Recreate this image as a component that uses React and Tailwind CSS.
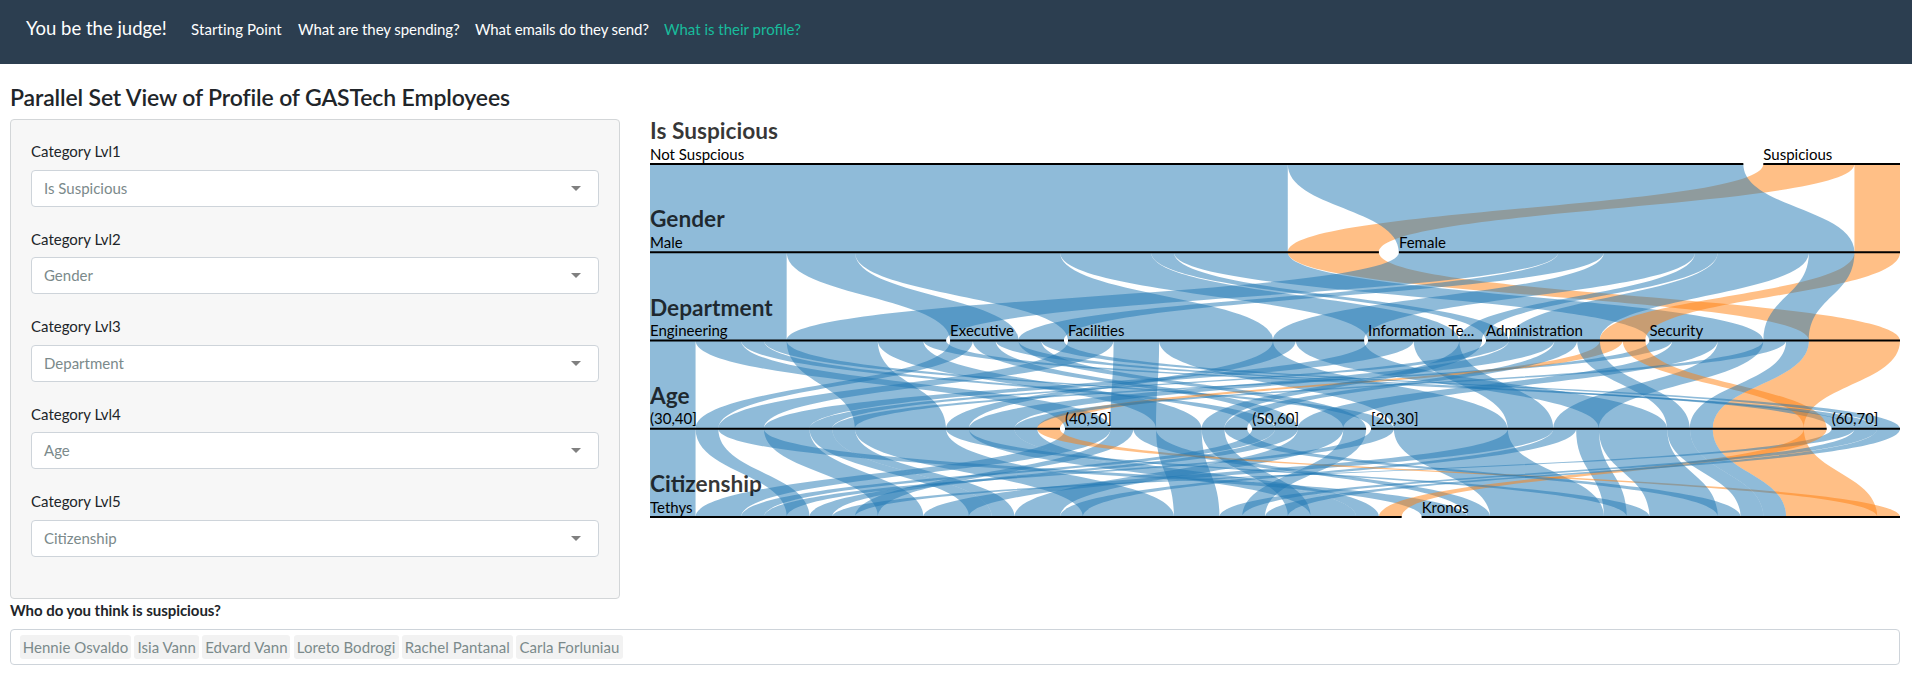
const NAV_LINKS = [
  { label: "Starting Point", tracking: "w-[107px] tracking-[0.1px]" },
  { label: "What are they spending?", tracking: "w-[177px] tracking-[-0.08px]" },
  { label: "What emails do they send?", tracking: "w-[189px] tracking-[-0.12px]" },
];
const LEVELS = ["Is Suspicious", "Gender", "Department", "Age", "Citizenship"];
const SUSPECTS = [
  { name: "Hennie Osvaldo", width: "w-[111px]" },
  { name: "Isia Vann", width: "w-[65px]" },
  { name: "Edvard Vann", width: "w-[88px]" },
  { name: "Loreto Bodrogi", width: "w-[105px]" },
  { name: "Rachel Pantanal", width: "w-[111px]" },
  { name: "Carla Forluniau", width: "w-[107px]" },
];

const DIMENSIONS = [
  { name: "Is Suspicious", categories: ["Not Suspcious", "Suspicious"] },
  { name: "Gender", categories: ["Male", "Female"] },
  {
    name: "Department",
    categories: ["Engineering", "Executive", "Facilities", "Information Te...", "Administration", "Security"],
  },
  { name: "Age", categories: ["(30,40]", "(40,50]", "(50,60]", "[20,30]", "(60,70]"] },
  { name: "Citizenship", categories: ["Tethys", "Kronos"] },
];

// One row per distinct profile: category index in each dimension, then head count.
const ROWS = [
  [0, 0, 0, 0, 0, 2],
  [0, 0, 0, 1, 0, 2],
  [0, 0, 0, 2, 0, 1],
  [0, 0, 0, 3, 0, 1],
  [0, 0, 1, 0, 0, 1],
  [0, 0, 1, 2, 0, 1],
  [0, 0, 1, 4, 0, 1],
  [0, 0, 2, 0, 1, 2],
  [0, 0, 2, 1, 0, 1],
  [0, 0, 2, 1, 1, 1],
  [0, 0, 2, 3, 1, 5],
  [0, 0, 3, 0, 0, 2],
  [0, 0, 3, 3, 0, 2],
  [0, 0, 4, 0, 0, 1],
  [0, 0, 5, 0, 0, 1],
  [0, 0, 5, 2, 0, 2],
  [0, 0, 5, 3, 0, 1],
  [0, 0, 5, 3, 1, 1],
  [0, 1, 0, 0, 0, 4],
  [0, 1, 0, 1, 0, 2],
  [0, 1, 0, 4, 0, 1],
  [0, 1, 1, 2, 0, 1],
  [0, 1, 1, 4, 0, 1],
  [0, 1, 2, 0, 1, 1],
  [0, 1, 2, 3, 1, 3],
  [0, 1, 3, 1, 0, 1],
  [0, 1, 4, 0, 0, 2],
  [0, 1, 4, 1, 1, 1],
  [0, 1, 4, 3, 1, 1],
  [0, 1, 5, 0, 0, 1],
  [0, 1, 5, 3, 1, 1],
  [1, 0, 5, 3, 1, 4],
  [1, 1, 4, 0, 1, 1],
  [1, 1, 4, 3, 0, 1],
];

const WIDTH = 1250;
const SPACING = 20;
const FIRST_Y = 45;
const STEP = 88.25;
const TOTAL = ROWS.reduce((sum, row) => sum + row[5], 0);
const UNIT = (WIDTH - SPACING) / TOTAL;
const COLORS = ["#1f77b4", "#ff7f0e"];

function buildNodes() {
  return DIMENSIONS.map((dimension, d) => {
    const gap = SPACING / (dimension.categories.length - 1);
    let x = 0;
    return dimension.categories.map((name, c) => {
      const count = ROWS.filter((row) => row[d] === c).reduce((sum, row) => sum + row[5], 0);
      const node = { name, x, width: count * UNIT };
      x += node.width + gap;
      return node;
    });
  });
}

function buildRibbons(nodes) {
  const ribbons = [];
  for (let d = 0; d < DIMENSIONS.length - 1; d += 1) {
    const used = { source: {}, target: {} };
    const groups = new Map();
    ROWS.forEach((row) => {
      const key = row.slice(0, d + 2).join("-");
      const group = groups.get(key) || { path: row, count: 0 };
      group.count += row[5];
      groups.set(key, group);
    });
    groups.forEach(({ path, count }, key) => {
      const s = path[d];
      const t = path[d + 1];
      const sx = nodes[d][s].x + (used.source[s] || 0) * UNIT;
      const tx = nodes[d + 1][t].x + (used.target[t] || 0) * UNIT;
      used.source[s] = (used.source[s] || 0) + count;
      used.target[t] = (used.target[t] || 0) + count;
      const w = count * UNIT;
      const y0 = FIRST_Y + d * STEP;
      const y1 = y0 + STEP;
      const m = (y0 + y1) / 2;
      ribbons.push({
        key: `${d}:${key}`,
        color: COLORS[path[0]],
        // Paint order: by gender, with suspicious ribbons under the others.
        layer: path[1] * 2 + (1 - path[0]),
        d: `M${sx},${y0}C${sx},${m} ${tx},${m} ${tx},${y1}h${w}C${tx + w},${m} ${sx + w},${m} ${sx + w},${y0}Z`,
      });
    });
  }
  return ribbons.sort((a, b) => a.layer - b.layer);
}

const NODES = buildNodes();
const RIBBONS = buildRibbons(NODES);

function ParallelSets() {
  return (
    <svg className="block h-[410px] w-[1250px] shrink-0" viewBox="0 0 1250 410">
      {RIBBONS.map((r) => (
        <path key={r.key} d={r.d} fill={r.color} fillOpacity="0.5" />
      ))}
      {DIMENSIONS.map((dimension, d) => {
        const y = FIRST_Y + d * STEP;
        return (
          <g key={dimension.name}>
            <text x="0" y={y - 25} className="text-[22.7px] font-bold" fill="#000" fillOpacity="0.78">
              {dimension.name}
            </text>
            {NODES[d].map((node) => (
              <g key={node.name}>
                <rect x={node.x} y={y - 1} width={node.width} height="2" fill="#000" />
                <text x={node.x} y={y - 4.5} className="text-[15px]" fill="#000">
                  {node.name}
                </text>
              </g>
            ))}
          </g>
        );
      })}
    </svg>
  );
}

function Select({ level, value }) {
  return (
    <div className="mb-5">
      <div className="mb-[7px] h-[22.5px] pt-px text-[15px] leading-[22.5px] text-[#212529]">Category Lvl{level}</div>
      <div className="mt-2 flex h-[37px] items-center justify-between rounded border border-[#ced4da] bg-white pr-[17px] pl-3 text-[15px] text-[#7b8a8b]">
        <span>{value}</span>
        <span className="h-0 w-0 border-x-[5px] border-t-[5px] border-x-transparent border-t-[#808080]" />
      </div>
    </div>
  );
}

export default function App() {
  return (
    <div className="min-h-[675px] w-full bg-white font-['Lato',sans-serif] text-[#212529]">
      <nav className="flex h-16 items-center bg-[#2c3e50] px-[26px] pb-[6px] text-[15px] text-white">
        <span className="w-[165px] text-[18.5px]">You be the judge!</span>
        <div className="flex whitespace-nowrap">
          {NAV_LINKS.map((link) => (
            <a key={link.label} className={link.tracking}>
              {link.label}
            </a>
          ))}
          <a className="text-[#18bc9c]">What is their profile?</a>
        </div>
      </nav>
      <main className="pr-3 pl-[10px]">
        <h3 className="mb-2 pt-[19px] text-[23px] leading-7 font-semibold tracking-[-0.14px]">
          Parallel Set View of Profile of GASTech Employees
        </h3>
        <div className="flex gap-[30px]">
          <section className="h-[480px] w-[610px] shrink-0 rounded border border-[#d3d6d8] bg-[#f7f7f7] px-5 pt-[19px]">
            {LEVELS.map((value, i) => (
              <Select key={value} level={i + 1} value={value} />
            ))}
          </section>
          <ParallelSets />
        </div>
        <div className="mb-[7px] h-[23px] text-[15px] leading-[23px] font-bold tracking-[-0.05px]">Who do you think is suspicious?</div>
        <div className="flex h-[36px] items-center gap-[3.2px] rounded border border-[#ced4da] px-[9px]">
          {SUSPECTS.map(({ name, width }) => (
            <span
              key={name}
              className={`${width} rounded-[3px] bg-[#f2f2f2] text-center text-[15px] leading-6 tracking-[0.05px] whitespace-nowrap text-[#7b8a8b]`}
            >
              {name}
            </span>
          ))}
        </div>
      </main>
    </div>
  );
}
